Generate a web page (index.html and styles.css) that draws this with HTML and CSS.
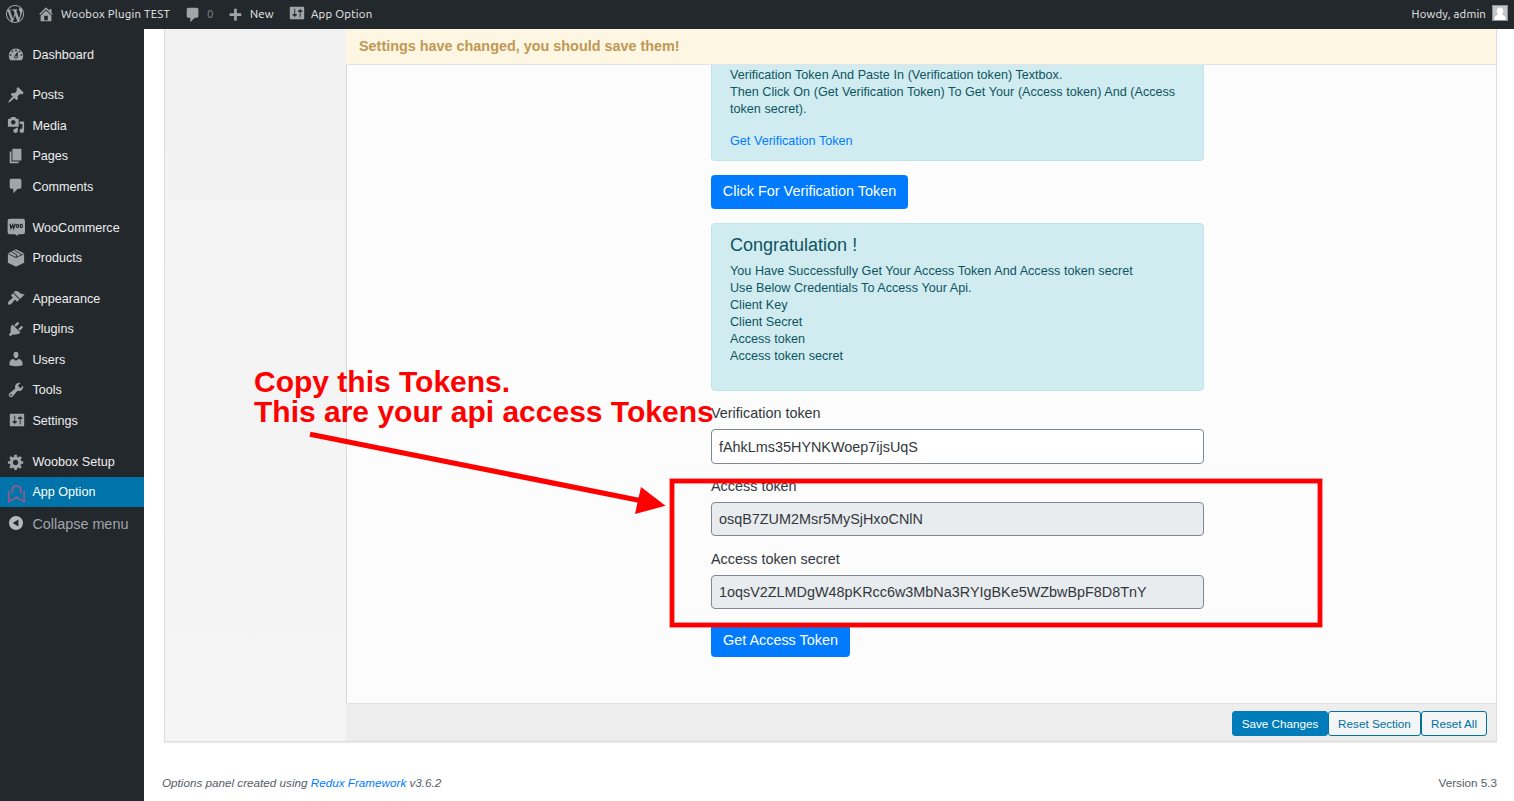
FILE: index.html
```html
<!DOCTYPE html>
<html lang="en">
<head>
<meta charset="utf-8">
<title>App Option</title>
<link rel="stylesheet" href="styles.css">
</head>
<body>
<header class="adminbar">
  <svg class="bar-icon wp" viewBox="0 0 20 20"><path d="M20 10c0-5.51-4.49-10-10-10C4.48 0 0 4.49 0 10c0 5.52 4.48 10 10 10 5.51 0 10-4.48 10-10zM7.78 15.37L4.37 6.22c.55-.02 1.17-.08 1.17-.08.5-.06.44-1.13-.06-1.11 0 0-1.45.11-2.37.11-.18 0-.37 0-.58-.01C4.12 2.69 6.87 1.11 10 1.11c2.33 0 4.45.87 6.05 2.34-.68-.11-1.65.39-1.65 1.58 0 .74.45 1.36.9 2.1.35.61.55 1.36.55 2.46 0 1.49-1.4 5-1.4 5l-3.03-8.37c.54-.02.82-.17.82-.17.5-.05.44-1.25-.06-1.22 0 0-1.44.12-2.38.12-.87 0-2.33-.12-2.33-.12-.5-.03-.56 1.2-.06 1.22l.92.08 1.26 3.41zM17.41 10c.24-.64.74-1.87.43-4.25.7 1.29 1.05 2.71 1.05 4.25 0 3.29-1.73 6.24-4.4 7.78.97-2.59 1.94-5.2 2.92-7.78zM6.1 18.09C3.12 16.65 1.11 13.53 1.11 10c0-1.3.23-2.48.72-3.59C3.25 10.3 4.67 14.2 6.1 18.09zm4.03-6.63l2.58 6.98c-.86.29-1.76.45-2.71.45-.79 0-1.57-.11-2.29-.33.81-2.38 1.62-4.74 2.42-7.1z"/></svg>
  <svg class="bar-icon home" viewBox="0 0 20 20"><path d="M16 8.5l1.53 1.53-1.06 1.06L10 4.6l-6.47 6.49-1.06-1.06L10 2.5l4 4v-2h2v4zm-6-2.46l6 5.99V18H4v-5.97zM12 17v-5H8v5h4z"/></svg>
  <span class="bar-text site">Woobox Plugin TEST</span>
  <svg class="bar-icon bubble" viewBox="0 0 20 20"><path d="M5 2h9c1.1 0 2 .9 2 2v7c0 1.1-.9 2-2 2h-2l-5 5v-5H5c-1.1 0-2-.9-2-2V4c0-1.1.9-2 2-2z"/></svg>
  <span class="bar-text count">0</span>
  <svg class="bar-icon plus" viewBox="0 0 20 20"><path d="M17 7v3h-5v5H9v-5H4V7h5V2h3v5h5z"/></svg>
  <span class="bar-text new">New</span>
  <svg class="bar-icon sliders" viewBox="0 0 20 20"><path d="M18 16V4c0-.55-.45-1-1-1H3c-.55 0-1 .45-1 1v12c0 .55.45 1 1 1h14c.55 0 1-.45 1-1zM8 11h1c.55 0 1 .45 1 1s-.45 1-1 1H8v1.5c0 .28-.22.5-.5.5s-.5-.22-.5-.5V13H6c-.55 0-1-.45-1-1s.45-1 1-1h1V5.5c0-.28.22-.5.5-.5s.5.22.5.5V11zm5-2h-1c-.55 0-1-.45-1-1s.45-1 1-1h1V5.5c0-.28.22-.5.5-.5s.5.22.5.5V7h1c.55 0 1 .45 1 1s-.45 1-1 1h-1v5.5c0 .28-.22.5-.5.5s-.5-.22-.5-.5V9z"/></svg>
  <span class="bar-text option">App Option</span>
  <span class="bar-text howdy">Howdy, admin</span>
  <svg class="avatar" viewBox="0 0 16 16"><path fill="#c3c4c7" d="M0 0h16v16H0z"/><path fill="#fff" d="M8 2.600c2 0 3.300 1.500 3.300 3.400 0 1.400-.6 2.500-1.300 3.100 0 1.200 3.600 1.400 3.600 4.300V15H2.400v-1.600c0-2.900 3.600-3.100 3.600-4.300C5.300 8.500 4.700 7.400 4.700 6 4.700 4.100 6 2.600 8 2.600z"/><path fill="none" stroke="#8c8f94" d="M.5.5h15v15H.5z"/></svg>
</header>
<div class="layout">
  <nav class="menu">
    <a class="item"><svg viewBox="0 0 20 20"><path d="M3.760 17h12.480c1.100-1.370 1.760-3.110 1.760-5 0-4.420-3.580-8-8-8s-8 3.580-8 8c0 1.890.66 3.630 1.760 5zM10 5c.55 0 1 .45 1 1s-.45 1-1 1-1-.45-1-1 .45-1 1-1zM6 6c.55 0 1 .45 1 1s-.45 1-1 1-1-.45-1-1 .45-1 1-1zm8 0c.55 0 1 .45 1 1s-.45 1-1 1-1-.45-1-1 .45-1 1-1zm-5.370 5.550L12 7v6c0 1.100-.9 2-2 2s-2-.9-2-2c0-.57.24-1.080.63-1.450zM4 10c.55 0 1 .45 1 1s-.45 1-1 1-1-.45-1-1 .45-1 1-1zm12 0c.55 0 1 .45 1 1s-.45 1-1 1-1-.45-1-1 .45-1 1-1zm-5 3c0-.55-.45-1-1-1s-1 .45-1 1 .45 1 1 1 1-.45 1-1z"/></svg>Dashboard</a>
    <div class="gap"></div>
    <a class="item"><svg viewBox="0 0 20 20"><path d="M10.440 3.020l1.820-1.820 6.360 6.350-1.830 1.820c-1.050-.68-2.480-.57-3.410.36l-.75.75c-.92.93-1.040 2.350-.35 3.410l-1.830 1.820-2.410-2.410-2.800 2.790c-.42.42-3.380 2.710-3.800 2.290s1.860-3.390 2.280-3.810l2.790-2.790L4.100 9.360l1.830-1.820c1.050.69 2.480.57 3.400-.36l.75-.75c.93-.92 1.050-2.350.36-3.410z"/></svg>Posts</a>
    <a class="item"><svg viewBox="0 0 20 20"><path d="M13 11V4c0-.55-.45-1-1-1h-1.670L9 1H5L3.670 3H2c-.55 0-1 .45-1 1v7c0 .55.45 1 1 1h10c.55 0 1-.45 1-1zM7 4.500c1.380 0 2.500 1.120 2.500 2.500S8.380 9.500 7 9.500 4.500 8.380 4.500 7 5.620 4.500 7 4.500zM14 6h5v10.500c0 1.380-1.120 2.500-2.500 2.500S14 17.880 14 16.500s1.120-2.500 2.500-2.500c.17 0 .34.02.5.05V9h-3V6zm-4 8.050V13h2v3.500c0 1.380-1.120 2.500-2.500 2.500S7 17.880 7 16.500 8.120 14 9.500 14c.17 0 .34.02.5.05z"/></svg>Media</a>
    <a class="item"><svg viewBox="0 0 20 20"><path d="M6 15V2h10v13H6zm-1 1h8v2H3V5h2v11z"/></svg>Pages</a>
    <a class="item"><svg viewBox="0 0 20 20"><path d="M5 2h9c1.100 0 2 .9 2 2v7c0 1.100-.9 2-2 2h-2l-5 5v-5H5c-1.100 0-2-.9-2-2V4c0-1.100.9-2 2-2z"/></svg>Comments</a>
    <div class="gap"></div>
    <a class="item"><svg viewBox="0 0 20 20"><path d="M3 .8h14.500Q20 .8 20 3.300v12.400q0 2.300-2.500 2.300H12.500l-1 2-2.500-2H3q-2.300 0-2.300-2.300V3.300Q.7.8 3 .8z"/><path d="M3.400 6.600l1 4.800 2-3.800 1 3.800 2-5" fill="none" stroke="#23282d" stroke-width="1.500"/><ellipse cx="11.700" cy="8.900" rx="1.200" ry="1.900" fill="none" stroke="#23282d" stroke-width="1.300"/><ellipse cx="15.800" cy="8.900" rx="1.200" ry="1.900" fill="none" stroke="#23282d" stroke-width="1.300"/></svg>WooCommerce</a>
    <a class="item"><svg viewBox="0 0 20 20"><path d="M10 .3l9 4.700v10.200l-9 4.600-9-4.600V5z"/><path d="M1.500 5.500L10 9.500l8.500-4M5.300 3.400L11 6.600l-1 2.700M8.500 1.800l6 3.400 1.500 1.400" fill="none" stroke="#23282d" stroke-width="1"/></svg>Products</a>
    <div class="gap"></div>
    <a class="item"><svg viewBox="0 0 20 20"><path d="M14.480 11.060L7.410 3.990l1.500-1.500c.5-.56 2.300-.47 3.510.32 1.210.8 1.430 1.280 2.910 2.100 1.180.64 2.450 1.260 4.450.85zm-.71.71L6.700 4.700 4.930 6.470c-.39.39-.39 1.020 0 1.410l1.060 1.060c.39.39.39 1.030 0 1.420-.6.6-1.430 1.110-2.210 1.690-.35.26-.7.53-1.010.84C1.430 14.230.4 16.080 1.400 17.070c.99 1 2.840-.03 4.180-1.360.31-.31.58-.66.85-1.020.57-.78 1.080-1.610 1.690-2.210.39-.39 1.020-.39 1.410 0l1.060 1.060c.39.39 1.020.39 1.410 0z"/></svg>Appearance</a>
    <a class="item"><svg viewBox="0 0 20 20"><path d="M13.110 4.360L9.870 7.600 8 5.730l3.240-3.240c.35-.34 1.050-.2 1.560.32.52.51.66 1.210.31 1.550zm-8 1.770l.91-1.120 9.010 9.010-1.190.84c-.71.71-2.630 1.160-3.820 1.160H6.140L4.900 17.260c-.59.59-1.540.59-2.120 0-.59-.58-.59-1.530 0-2.120l1.240-1.240v-3.880c0-1.130.4-3.190 1.090-3.890zm7.260 3.970l3.240-3.240c.34-.35 1.040-.21 1.550.31.52.51.66 1.210.31 1.550l-3.240 3.250z"/></svg>Plugins</a>
    <a class="item"><svg viewBox="0 0 20 20"><path d="M10 9.250c-2.270 0-2.730-3.440-2.730-3.440C7 4.020 7.820 2 9.970 2c2.160 0 2.980 2.020 2.710 3.810 0 0-.41 3.440-2.680 3.440zm0 2.570L12.720 10c2.390 0 4.520 2.330 4.520 4.530v2.490s-3.650 1.130-7.240 1.130c-3.650 0-7.240-1.130-7.240-1.130v-2.490c0-2.250 1.940-4.480 4.470-4.480z"/></svg>Users</a>
    <a class="item"><svg viewBox="0 0 20 20"><path d="M16.680 9.770c-1.340 1.340-3.300 1.670-4.950.99l-5.410 6.520c-.99.99-2.590.99-3.580 0s-.99-2.590 0-3.570l6.520-5.420c-.68-1.650-.35-3.610.99-4.950 1.280-1.280 3.120-1.620 4.720-1.060l-2.890 2.890 2.820 2.820 2.860-2.870c.53 1.580.18 3.390-1.080 4.650zM3.810 16.210c.4.39 1.040.39 1.430 0 .4-.4.4-1.040 0-1.430-.39-.4-1.030-.4-1.430 0-.39.39-.39 1.030 0 1.430z"/></svg>Tools</a>
    <a class="item settings"><svg viewBox="0 0 20 20"><path d="M18 16V4c0-.55-.45-1-1-1H3c-.55 0-1 .45-1 1v12c0 .55.45 1 1 1h14c.55 0 1-.45 1-1zM8 11h1c.55 0 1 .45 1 1s-.45 1-1 1H8v1.500c0 .28-.22.5-.5.5s-.5-.22-.5-.5V13H6c-.55 0-1-.45-1-1s.45-1 1-1h1V5.500c0-.28.22-.5.5-.5s.5.22.5.5V11zm5-2h-1c-.55 0-1-.45-1-1s.45-1 1-1h1V5.500c0-.28.22-.5.5-.5s.5.22.5.5V7h1c.55 0 1 .45 1 1s-.45 1-1 1h-1v5.500c0 .28-.22.5-.5.5s-.5-.22-.5-.5V9z"/></svg>Settings</a>
    <div class="gap"></div>
    <a class="item setup"><svg viewBox="0 0 20 20"><path d="M18 12h-2.180c-.17.7-.44 1.350-.81 1.930l1.540 1.540-2.100 2.100-1.540-1.540c-.58.36-1.230.63-1.910.79V19H8v-2.180c-.68-.16-1.330-.43-1.910-.79l-1.540 1.540-2.120-2.120 1.540-1.540c-.36-.58-.63-1.230-.79-1.910H1V9.030h2.170c.16-.7.44-1.350.8-1.940L2.430 5.550l2.100-2.100 1.540 1.540c.58-.37 1.240-.64 1.930-.81V2h3v2.180c.68.16 1.330.43 1.910.79l1.540-1.540 2.120 2.120-1.540 1.540c.36.59.64 1.240.8 1.940H18V12zm-8.500 1.500c1.660 0 3-1.340 3-3s-1.340-3-3-3-3 1.340-3 3 1.340 3 3 3z"/></svg>Woobox Setup</a>
    <a class="item current"><svg viewBox="0 0 18 18"><path d="M1.800 5.500v11.300L9.500 12l7.700 4.800V5.500M5.200 8.300V4.500Q5.700 1 9.500 1T13.800 4.500v3.800" fill="none" stroke="#835f8c" stroke-width="1.900"/></svg>App Option</a>
    <a class="item collapse"><svg viewBox="0 0 20 20"><path fill-rule="evenodd" d="M10 2.200a7.800 7.800 0 1 0 .01 0zM12.700 6v8L6.300 10z"/></svg>Collapse menu</a>
  </nav>
  <main class="content">
    <section class="panel">
      <div class="tabs"></div>
      <div class="main">
        <div class="notice">Settings have changed, you should save them!</div>
        <div class="body">
          <div class="form">
            <div class="info first">Verification Token And Paste In (Verification token) Textbox.<br>Then Click On (Get Verification Token) To Get Your (Access token) And (Access<br>token secret).<a class="link">Get Verification Token</a></div>
            <button class="btn verify">Click For Verification Token</button>
            <div class="info done"><h4>Congratulation !</h4>You Have Successfully Get Your Access Token And Access token secret<br>Use Below Credentials To Access Your Api.<br>Client Key<br>Client Secret<br>Access token<br>Access token secret</div>
            <label class="field">Verification token<span class="input">fAhkLms35HYNKWoep7ijsUqS</span></label>
            <label class="field">Access token<span class="input off">osqB7ZUM2Msr5MySjHxoCNlN</span></label>
            <label class="field last">Access token secret<span class="input off">1oqsV2ZLMDgW48pKRcc6w3MbNa3RYIgBKe5WZbwBpF8D8TnY</span></label>
            <button class="btn access">Get Access Token</button>
          </div>
        </div>
        <div class="actions">
          <button class="act save">Save Changes</button><button class="act section">Reset Section</button><button class="act all">Reset All</button>
        </div>
      </div>
    </section>
    <footer class="foot"><em>Options panel created using <a class="redux">Redux Framework</a> v3.6.2</em><span>Version 5.3</span></footer>
  </main>
</div>
<svg class="annotation" viewBox="0 0 1514 801">
  <path d="M310 434.300L640 500.500" stroke="#f00" stroke-width="5.200"/>
  <path d="M641 487L665.500 505.800L635 514z" fill="#f00"/>
  <rect x="672" y="481" width="648" height="144" fill="none" stroke="#f00" stroke-width="4.800"/>
  <text x="254" y="392">Copy this Tokens.</text>
  <text x="254" y="422">This are your api access Tokens</text>
</svg>
</body>
</html>
```
FILE: styles.css
```css
* { box-sizing: border-box; }
html, body { height: 100%; }
body {
  margin: 0;
  overflow: hidden;
  background: #fff;
  font-family: "Liberation Sans", Arial, sans-serif;
  color: #32373c;
}
button { font-family: inherit; margin: 0; }

/* Top bar */
.adminbar {
  display: flex;
  align-items: center;
  height: 29px;
  padding: 0 6px;
  background: #23282d;
  color: #eee;
  font-family: Ubuntu, "Noto Sans", sans-serif;
  font-size: 11.400px;
  letter-spacing: .22px;
}
.bar-icon { width: 18px; height: 18px; fill: #a0a5aa; flex: none; margin-top: -2px; }
.bar-text { line-height: 28px; white-space: nowrap; flex: none; height: 29px; }
.wp { margin-right: 13px; }
.home { margin-right: 6px; }
.site { width: 123px; }
.bubble { margin-top: 1px; }
.count { color: #82878c; width: 19px; margin-left: 5px; }
.plus { margin-top: 2px; }
.new { width: 38px; margin-left: 6px; }
.sliders { margin-top: -3px; }
.option { margin-left: 5px; }
.howdy { margin-left: auto; margin-right: 6px; letter-spacing: .17px; }
.avatar { width: 16px; height: 16px; margin-top: -3px; flex: none; }

.layout { display: flex; height: 772px; }

/* Side menu */
.menu { width: 144px; flex: none; background: #23282d; padding-top: 10.500px; }
.item {
  display: flex;
  align-items: center;
  height: 30.540px;
  padding-left: 7px;
  font-size: 12.600px;
  color: #eee;
}
.item svg { width: 18px; height: 18px; margin: -1px 7.400px 0 0; fill: #a0a5aa; flex: none; }
.settings svg { margin-left: 1px; margin-right: 6.400px; }
.item.setup svg { margin-top: 1px; }
.gap { height: 10.100px; }
.item.current { height: 30px; background: #0073aa; color: #fff; }
.item.current svg { margin-top: 5px; }
.item.collapse { height: 35px; font-size: 14.400px; color: #a0a5aa; }
.item.collapse svg { margin-top: -3px; fill: #b4b9be; }

/* Options panel */
.content { flex: 1; padding: 0 17px 0 20px; }
.panel {
  display: flex;
  height: 713px;
  border: 1px solid #dedede;
  border-top: 0;
  box-shadow: 0 1px 1px #ededed;
  background: #f3f3f3;
}
.tabs { width: 181px; flex: none; background: linear-gradient(#f2f2f2, #f5f5f5); }
.main { flex: 1; display: flex; flex-direction: column; }
.notice {
  height: 36px;
  flex: none;
  padding-left: 13px;
  border-bottom: 1px solid #e3e3e3;
  background: #fdf6e3;
  color: #c09853;
  font-size: 14.400px;
  font-weight: bold;
  line-height: 34px;
}
.body {
  flex: none;
  height: 638px;
  border-left: 1px solid #d8d8d8;
  background: #fcfcfc;
  padding-left: 364px;
  overflow: hidden;
}
.form { width: 493px; display: flex; flex-direction: column; align-items: flex-start; }
.info {
  width: 493px;
  border: 1px solid #bee5eb;
  border-radius: 4px;
  background: #d1ecf1;
  color: #0c5460;
  padding: 0 18px;
  font-size: 12.600px;
  line-height: 17px;
  word-spacing: .15px;
  white-space: nowrap;
}
.info.first { height: 96px; border-top: 0; border-radius: 0 0 4px 4px; padding-top: 2px; }
.link { display: block; margin-top: 15px; color: #007bff; }
.btn {
  height: 34px;
  border: 0;
  border-radius: 4px;
  background: #007bff;
  color: #fff;
  font-size: 14.400px;
  padding: 0 0 2px;
  white-space: nowrap;
}
.verify { width: 197px; margin: 14px 0; }
.access { width: 139px; height: 33px; margin-top: 14px; }
.info.done { height: 168px; padding-top: 10px; margin-bottom: 13px; }
.info h4 { margin: 0 0 7px; font-size: 18px; font-weight: normal; line-height: 22px; }
.field { display: block; width: 493px; height: 73px; font-size: 14.400px; line-height: 19px; }
.field.last { height: 60px; }
.input {
  display: block;
  height: 35px;
  margin-top: 6px;
  border: 1px solid #7e8993;
  border-radius: 4px;
  background: #fff;
  padding-left: 7px;
  line-height: 34px;
}
.off { height: 34px; line-height: 32px; background: #e9ecef; }
.actions {
  flex: 1;
  display: flex;
  justify-content: flex-end;
  padding: 7px 9px 0 0;
  border-top: 1px solid #e3e3e3;
  background: #ededed;
}
.act {
  height: 25px;
  border: 1px solid #0071a1;
  border-radius: 3px;
  background: #f3f5f6;
  color: #0071a1;
  font-size: 11.700px;
  padding: 0;
  white-space: nowrap;
}
.save { width: 96px; background: #007cba; border-color: #007cba; color: #fff; }
.section { width: 93px; }
.all { width: 66px; }
.foot {
  display: flex;
  justify-content: space-between;
  margin: 33px 0 0 -2px;
  font-size: 11.700px;
  line-height: 16px;
  color: #555d66;
}
.redux { color: #007bff; }

/* Callout drawn over the page */
.annotation { position: absolute; left: 0; top: 0; width: 1514px; height: 801px; pointer-events: none; }
.annotation text { font: bold 30px "Liberation Sans", Arial, sans-serif; fill: #f00; }
```
